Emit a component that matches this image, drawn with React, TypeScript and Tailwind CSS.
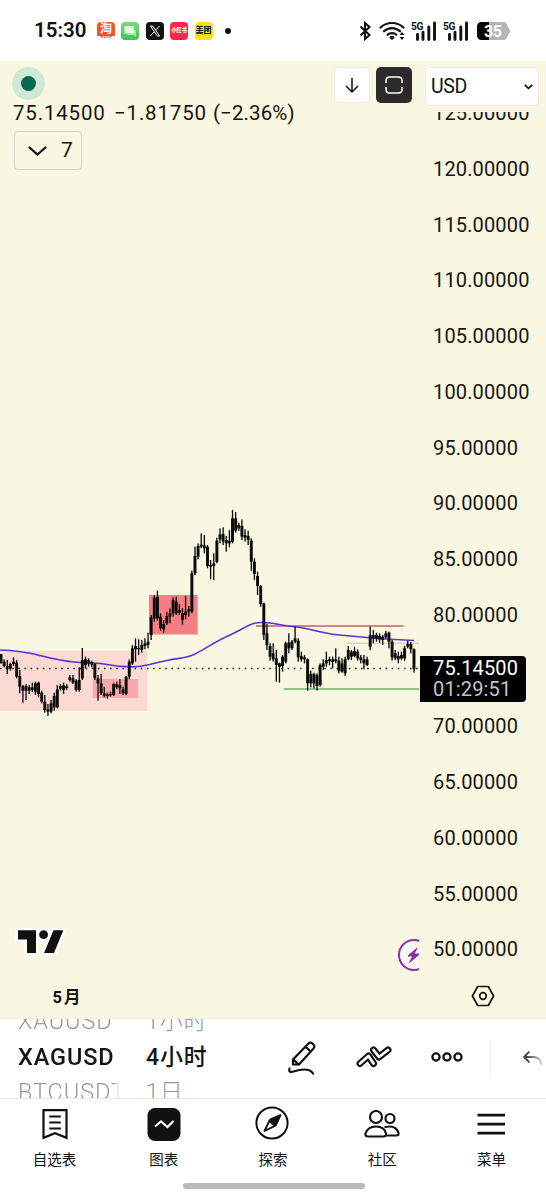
import type { ReactNode } from "react";

// [high, low, bodyTop, bodyBottom], three units per pixel, oldest first
const CANDLES: number[][] = [
  [462, 490, 462, 490], [478, 502, 485, 498], [480, 522, 498, 508], [488, 512, 492, 506],
  [472, 498, 485, 492], [480, 535, 488, 530], [510, 580, 528, 560], [555, 608, 558, 572],
  [552, 600, 558, 572], [555, 582, 562, 572], [548, 576, 562, 570], [545, 585, 550, 575],
  [545, 592, 548, 582], [572, 610, 578, 605], [585, 638, 605, 630], [612, 648, 628, 635],
  [600, 640, 610, 635], [578, 632, 588, 622], [555, 625, 568, 622], [552, 572, 558, 566],
  [548, 582, 556, 570], [552, 570, 558, 564], [525, 545, 532, 540], [525, 552, 535, 548],
  [538, 575, 542, 570], [502, 575, 540, 570], [444, 540, 480, 535], [470, 505, 478, 495],
  [475, 500, 480, 490], [482, 502, 486, 494], [490, 540, 492, 535], [525, 602, 535, 550],
  [522, 585, 550, 580], [560, 592, 580, 587], [578, 596, 583, 588], [575, 590, 582, 586],
  [548, 588, 552, 585], [545, 568, 552, 562], [538, 582, 555, 565], [560, 585, 568, 580],
  [528, 586, 530, 582], [478, 538, 485, 530], [435, 495, 445, 490], [415, 485, 438, 448],
  [418, 465, 444, 448], [420, 458, 435, 450], [415, 448, 430, 438], [398, 445, 425, 435],
  [345, 420, 352, 405], [285, 365, 293, 355], [272, 362, 290, 355], [340, 392, 350, 385],
  [360, 398, 372, 388], [335, 375, 348, 370], [325, 370, 340, 350], [292, 350, 300, 340],
  [290, 345, 305, 340], [312, 345, 330, 338], [325, 375, 340, 360], [288, 358, 335, 345],
  [318, 350, 328, 335], [212, 340, 220, 335], [140, 225, 168, 220], [130, 178, 138, 170],
  [100, 145, 134, 140], [105, 160, 136, 145], [135, 205, 140, 198], [180, 238, 195, 200],
  [160, 240, 190, 198], [113, 190, 122, 186], [85, 130, 103, 118], [82, 135, 102, 125],
  [108, 155, 120, 130], [90, 142, 122, 130], [30, 130, 55, 125], [36, 98, 55, 92],
  [68, 92, 75, 85], [58, 120, 78, 110], [88, 125, 105, 113], [92, 135, 108, 120],
  [115, 212, 122, 185], [175, 240, 185, 222], [215, 285, 228, 258], [255, 320, 258, 312],
  [308, 420, 310, 405], [372, 450, 400, 435], [430, 482, 438, 470], [430, 485, 460, 478],
  [450, 545, 475, 495], [488, 548, 490, 500], [465, 515, 470, 498], [425, 490, 430, 485],
  [400, 460, 428, 445], [420, 450, 425, 445], [380, 430, 415, 425], [415, 485, 422, 472],
  [455, 485, 468, 478], [465, 490, 472, 478], [475, 572, 478, 550], [512, 562, 522, 550],
  [518, 565, 522, 550], [520, 572, 525, 558], [490, 560, 495, 555], [478, 510, 490, 500],
  [455, 500, 480, 490], [470, 495, 478, 484], [470, 505, 478, 486], [445, 490, 478, 484],
  [470, 520, 482, 512], [475, 518, 490, 515], [470, 528, 478, 520], [438, 480, 450, 478],
  [450, 480, 455, 470], [440, 472, 453, 468], [448, 482, 455, 475], [465, 490, 472, 480],
  [465, 508, 478, 490], [470, 498, 478, 495], [380, 450, 405, 440], [390, 430, 405, 415],
  [398, 425, 405, 415], [400, 428, 408, 418], [405, 435, 410, 420], [393, 415, 400, 412],
  [395, 445, 398, 425], [420, 482, 425, 472], [450, 480, 460, 475], [455, 490, 468, 478],
  [455, 480, 465, 475], [438, 482, 445, 475], [422, 445, 432, 440], [426, 460, 432, 448],
  [445, 518, 448, 508],
];

const PRICES = [125, 120, 115, 110, 105, 100, 95, 90, 85, 80, 75, 70, 65, 60, 55, 50];

function Signal() {
  return (
    <svg width="26" height="22" viewBox="0 0 26 22">
      <text x="0" y="9.500" fontSize="10.200" fontWeight="700" textLength="12.500" fill="#111">5G</text>
      <path d="M6.500 14.500v5M12 12.300v7.200M17.800 7v12.500M23.500 3v16.500" stroke="#111" strokeWidth="2.900" strokeLinecap="round" />
    </svg>
  );
}

function AppBadge({ className, children }: { className: string; children?: ReactNode }) {
  return (
    <span className={`flex h-[18px] w-[18px] items-center justify-center overflow-hidden rounded-[4px] whitespace-nowrap ${className}`}>
      {children}
    </span>
  );
}

function StatusBar() {
  return (
    <header className="flex h-[61px] shrink-0 items-center bg-white pr-9 pl-[34px] text-[#111]">
      <span className="w-[63px] text-[20.500px] font-semibold">15:30</span>
      <div className="flex items-center gap-[6.400px]">
        <AppBadge className="flex-col bg-[#f05a22] text-[12px] leading-[14px] font-bold text-white">
          <span>淘</span>
          <span className="h-[4px] w-full bg-white text-center text-[3px] leading-[3px] text-[#e0501c]">淘宝闪购</span>
        </AppBadge>
        <AppBadge className="bg-gradient-to-b from-[#75dc7c] to-[#3fc158]">
          <svg width="14" height="14" viewBox="0 0 14 14">
            <path d="M4 6h9v7l-2-2H4z" fill="#a4e9a4" />
            <path d="M1.500 2h9.500v7H4L1.500 10z" fill="#e5f9e2" />
          </svg>
        </AppBadge>
        <AppBadge className="bg-[#101214]">
          <svg width="12" height="12" viewBox="0 0 12 12" fill="none" stroke="#fff">
            <path d="M1.300 1h2.300l7.100 10H8.400zM10.400 1 6.700 5.200M5.300 6.800 1.300 11" strokeWidth="1" />
          </svg>
        </AppBadge>
        <AppBadge className="bg-[#fb2848] text-[5.200px] font-black text-white">小红书</AppBadge>
        <AppBadge className="bg-[#f9df25] text-[8px] font-black text-[#222]">美团</AppBadge>
      </div>
      <span className="ml-3 h-[6px] w-[6px] rounded-full bg-[#111]" />
      <div className="ml-auto flex items-center">
        <svg className="mr-[7px]" width="13" height="20" viewBox="0 0 13 20" fill="none" stroke="#111" strokeWidth="2">
          <path d="m1.500 5.500 9 8.500-4.500 4V2l4.500 4-9 8.500" />
        </svg>
        <svg className="mr-[5px]" width="27" height="20" viewBox="0 0 27 20" fill="none" stroke="#111" strokeWidth="2.200" strokeLinecap="round">
          <path d="M1.500 6.500c6.500-6 16.500-6 23 0M5 10.300c4.500-4.300 11.500-4.300 16 0M8.600 13.700c2.300-2.200 6.500-2.200 8.800 0" />
          <path d="m10.200 16.200 2.800 3 2.800-3a4 4 0 0 0-5.600 0z" fill="#111" stroke="none" />
          <path d="m20.500 14 2.500-3 2.500 3zm0 2 2.500 3 2.500-3z" fill="#111" stroke="none" />
        </svg>
        <Signal />
        <span className="w-[6px]" />
        <Signal />
        <svg className="ml-2" width="33" height="18" viewBox="0 0 33 18">
          <path d="M5 0h21q4 0 4.500 4l2.300 3.500v3L30.500 14q-.5 4-4.500 4H5q-5 0-5-5V5q0-5 5-5z" fill="#b5b5b5" />
          <path d="M12 0H5Q0 0 0 5v8q0 5 5 5h7z" fill="#050505" />
          <text x="7" y="14.700" fontSize="16" fontWeight="700" textLength="18" fill="#fff">35</text>
        </svg>
      </div>
    </header>
  );
}

function CandleChart() {
  return (
    <svg className="h-[957px] w-[419px] shrink-0" viewBox="0 61 419 957" fill="none">
      <rect x="0" y="651" width="147.300" height="60" fill="#fbdad4" />
      <rect x="93" y="679" width="45" height="19" fill="#f9a9ad" />
      <rect x="149" y="595" width="48.700" height="39.500" fill="#f77f83" />
      <path d="M346 643.200h73" stroke="#c9c6b8" />
      <path d="M256 626h147.500" stroke="#de7f82" strokeWidth="2.200" />
      <path d="M284 689h135" stroke="#89c588" strokeWidth="2.200" />
      <path
        d="M0 650c14 .3 28 2.300 42 6s20 5 35 6.300 20 .2 30 2.200 18 2.600 28 2.300 20-4 33-6.500 18-2 27-6.300S216 641 230 635s20-12.700 32-12.500 20 3 33 4.300 26 6.200 42 8 50 4.700 77 5.700"
        stroke="#5a32d8"
        strokeWidth="1.600"
      />
      <path d="M0 668.500h420" stroke="#111" strokeWidth="1.600" strokeDasharray="1.500 4.620" />
      <g transform="translate(0 500) scale(.33333)" fill="#0b0b09">
        {CANDLES.map(([high, low, top, bottom], i) => {
          const x = 3 + i * 9.386;
          return (
            <g key={i}>
              <rect x={x - 2} y={high} width="4" height={low - high} />
              <rect x={x - 4.400} y={top} width="8.800" height={bottom - top} />
            </g>
          );
        })}
      </g>
      <g stroke="#fff" strokeWidth="5" strokeLinejoin="round">
        <path d="M18 930.300h18V953h-9v-13.500h-9zM53.500 930.300h9.800L54 953h-10z" />
        <circle cx="44" cy="934.700" r="4.500" />
      </g>
      <g fill="#111">
        <path d="M18 930.300h18V953h-9v-13.500h-9zM53.500 930.300h9.800L54 953h-10z" />
        <circle cx="43.600" cy="934.700" r="4.400" />
      </g>
      <circle cx="414" cy="955" r="15" fill="#faf7ee" stroke="#8e2da8" strokeWidth="2" />
      <path d="m417 948-9 8h5l-3.500 6.500 10-8.500h-5.500z" fill="#8e2da8" stroke="#8e2da8" strokeLinejoin="round" />
      <text x="52.500" y="1003" fontSize="16.500" fontWeight="700" textLength="28" fill="#111">5月</text>
    </svg>
  );
}

function PriceAxis() {
  return (
    <div className="flex w-[127px] flex-col text-[20px] tracking-[0.150px] text-[#15150f]">
      <div className="mt-[51px] h-[864px] overflow-hidden">
        <div className="-mt-[26.800px] pl-[14px]">
          {PRICES.map((p) => (
            <div key={p} className="flex h-[55.750px] items-center">
              {/* the last-price label covers the 75 slot */}
              {p !== 75 && p.toFixed(5)}
            </div>
          ))}
        </div>
      </div>
      <svg className="mt-[9px] ml-[52px]" width="24" height="22" viewBox="0 0 24 22" fill="none" stroke="#171711" strokeWidth="1.700">
        <path d="M6.700 1.500h10.600L22.600 11l-5.300 9.500H6.700L1.400 11z" strokeLinejoin="round" />
        <circle cx="12" cy="11" r="3.300" />
      </svg>
    </div>
  );
}

function ChartHeader() {
  return (
    <div className="absolute inset-x-0 top-0 flex justify-between text-[#15150f]">
      <div className="flex flex-col pt-[6px] pl-3">
        <span className="flex h-[33px] w-[33px] items-center justify-center rounded-full bg-[#d0e9d5]">
          <span className="h-[15px] w-[15px] rounded-full bg-[#066b55]" />
        </span>
        <div className="-mt-px flex h-[28px] items-center pl-px text-[20.500px] tracking-[0.820px] whitespace-nowrap">
          <span className="w-[101px]">75.14500</span>
          <span className="w-[99px]">−1.81750</span>
          <span className="tracking-[0.100px]">(−2.36%)</span>
        </div>
        <button className="mt-[4px] ml-[2px] flex h-[39px] w-[68px] items-center rounded-[4px] border border-[#d8d5c7] pl-[13px] text-[21px]">
          <svg width="19" height="12" viewBox="0 0 19 12" fill="none" stroke="#111" strokeWidth="2.200" strokeLinecap="round">
            <path d="m1.500 2.500 8 7 8-7" />
          </svg>
          <span className="ml-[14px]">7</span>
        </button>
      </div>
      <div className="flex items-start pt-[6px] pr-[7px]">
        <button className="flex h-[36px] w-[36px] items-center justify-center rounded-[5px] border border-[#eeebdf] bg-white">
          <svg width="14" height="17" viewBox="0 0 14 17" fill="none" stroke="#111" strokeWidth="1.500">
            <path d="M7 1v14M1 9l6 6 6-6" />
          </svg>
        </button>
        <button className="ml-[6px] flex h-[36px] w-[36px] items-center justify-center rounded-[5px] bg-[#2d2a2c]">
          <svg width="18" height="18" viewBox="0 0 18 18" fill="none" stroke="#fff" strokeWidth="1.500">
            <path d="M1 7V4.500Q1 1 4.500 1h9Q17 1 17 4.500V7M1 11v2.500Q1 17 4.500 17h9q3.500 0 3.500-3.500V11" />
          </svg>
        </button>
        <button className="ml-[13px] flex h-[39px] w-[114px] items-center justify-between rounded-[5px] border border-[#eeebdf] bg-white pr-[5px] pl-[5px] text-[19.500px] tracking-[-0.300px]">
          USD
          <svg width="9" height="6" viewBox="0 0 9 6" fill="none" stroke="#111" strokeWidth="1.700">
            <path d="m.7.900 3.800 3.500L8.300.900" />
          </svg>
        </button>
      </div>
    </div>
  );
}

function Wheel({ items, className }: { items: string[]; className: string }) {
  return (
    <div className={`h-[79px] overflow-hidden whitespace-nowrap ${className}`}>
      <div className="-mt-[15px] flex h-[36px] items-center font-light text-[#999]">{items[0]}</div>
      <div className="flex h-[36px] items-center font-medium text-[#151515]">{items[1]}</div>
      <div className="flex h-[34px] items-center font-light text-[#999]">{items[2]}</div>
    </div>
  );
}

function Toolbar() {
  return (
    <div className="flex h-[80px] shrink-0 items-center border-t border-[#efede6] bg-white pl-[18px] text-[#111]">
      <Wheel
        className="w-[102px] text-[23.500px] tracking-[0.900px] [mask-image:linear-gradient(to_right,black_93%,transparent)]"
        items={["XAUUSD", "XAGUSD", "BTCUSDT"]}
      />
      <Wheel className="ml-[26px] w-[66px] text-[23px] tracking-[0.900px]" items={["1小时", "4小时", "1日"]} />
      <svg className="mb-[2px] ml-[75px]" width="32" height="36" viewBox="0 0 32 36" fill="none" stroke="#111" strokeWidth="2.200" strokeLinejoin="round" strokeLinecap="round">
        <path d="M6 19.500 21.500 3.500q2-2 4.500.5t.5 4.500L12 24.500H6zM18.500 6.500l5 5M6.500 19.500l5 5" />
        <path d="M2.500 28.500c-1 3 .5 4 4 3 7-2.200 16-3.500 19.500 2" />
      </svg>
      <svg className="mb-[3px] ml-[37px]" width="36" height="24" viewBox="0 0 36 24" fill="none" strokeLinejoin="round" strokeLinecap="round">
        <g stroke="#111" strokeWidth="7">
          <path d="m4 18.500 8.500-7.500 5 7.500" />
          <path d="m17.500 5 5.500 7 9-7" />
        </g>
        <g stroke="#fff" strokeWidth="2.800">
          <path d="m4 18.500 8.500-7.500 5 7.500" />
          <path d="m17.500 5 5.500 7 9-7" />
        </g>
      </svg>
      <svg className="mb-[3px] ml-[39px]" width="32" height="12" viewBox="0 0 32 12" fill="none" stroke="#111" strokeWidth="2.300">
        <circle cx="5" cy="6" r="3.600" />
        <circle cx="16" cy="6" r="3.600" />
        <circle cx="27" cy="6" r="3.600" />
      </svg>
      <span className="ml-[27px] h-[36px] w-px bg-[#ececec]" />
      <svg className="ml-[31px]" width="22" height="18" viewBox="0 0 22 18" fill="none" strokeWidth="1.800">
        <defs>
          <linearGradient id="undo" gradientUnits="userSpaceOnUse" x1="0" y1="0" x2="22" y2="0">
            <stop offset=".2" stopColor="#444" />
            <stop offset="1" stopColor="#ddd" />
          </linearGradient>
        </defs>
        <path d="M7.500 1.500 2 7l5.500 5.500M2 7h9q8 0 8.500 8" stroke="url(#undo)" />
      </svg>
    </div>
  );
}

const TABS: { label: string; icon: ReactNode }[] = [
  {
    label: "自选表",
    icon: (
      <>
        <path d="M5.500 3.200h23v27.600L17 26.300 5.500 30.800z" />
        <path d="M11.300 9.500h11.500M11.300 15.500h11.500M11.300 21.500h11.500" />
      </>
    ),
  },
  {
    label: "图表",
    icon: (
      <>
        <rect x=".5" y="1" width="33" height="33" rx="7.500" fill="#111" stroke="none" />
        <path d="m8 19.500 6-5 6.500 5.500 6-6" stroke="#fff" />
      </>
    ),
  },
  {
    label: "探索",
    icon: (
      <>
        <circle cx="16" cy="16" r="15.600" strokeWidth="2" />
        <path d="M24.500 8 15 12.200q-1.200.6-1.700 1.800L8.500 24l10-4.800q1.200-.6 1.700-1.800z" strokeWidth="1.900" strokeLinejoin="round" />
        <path d="M24.500 8 15 12.200 13 14.500l5.500 5 1.700-2.100z" fill="#111" strokeWidth="1" />
      </>
    ),
  },
  {
    label: "社区",
    icon: (
      <>
        <circle cx="11" cy="10" r="6" />
        <circle cx="25" cy="11.500" r="4.500" />
        <path d="M3 29.500h15.500q3 0 2.500-3c-1-4.500-4-7-10-7s-9 2.500-10.500 7q-.6 3 2.500 3zM19.500 20.200c8-2 12.500 1 14 5.800q.6 2.500-2 2.500H20.500" strokeLinejoin="round" />
      </>
    ),
  },
  {
    label: "菜单",
    icon: <path d="M3.500 8.200h27.500M3.500 17.200h27.500M3.500 26.200h27.500" strokeWidth="2.700" />,
  },
];

function BottomNav() {
  return (
    <nav className="flex h-[102px] shrink-0 flex-col items-center border-t border-[#e8e8e8] bg-white text-[#111]">
      <div className="flex w-full">
        {TABS.map(({ label, icon }) => (
          <button key={label} className="flex flex-1 flex-col items-center pt-[8px]">
            <svg className="overflow-visible" width="34" height="35" viewBox="0 0 34 35" fill="none" stroke="#111" strokeWidth="2.200">
              {icon}
            </svg>
            <span className="mt-[9px] text-[14.500px] leading-[20px]">{label}</span>
          </button>
        ))}
      </div>
      <span className="mt-[12px] ml-[2px] h-[6px] w-[182px] rounded-full bg-[#b9b9b9]" />
    </nav>
  );
}

export default function App() {
  return (
    <div className="flex h-[1200px] w-[546px] flex-col overflow-hidden bg-white font-[Roboto,'Noto_Sans_CJK_SC',sans-serif]">
      <StatusBar />
      <main className="relative flex h-[957px] shrink-0 bg-[#f9f6e1]">
        <CandleChart />
        <PriceAxis />
        <ChartHeader />
        <div className="absolute top-[595px] left-[420px] flex h-[46px] w-[106px] flex-col justify-center rounded-r-[4px] bg-black pl-[13px] text-[20px] leading-[21px] tracking-[0.150px] text-white">
          <span>75.14500</span>
          <span className="text-[#c4c4c4]">01:29:51</span>
        </div>
      </main>
      <Toolbar />
      <BottomNav />
    </div>
  );
}
